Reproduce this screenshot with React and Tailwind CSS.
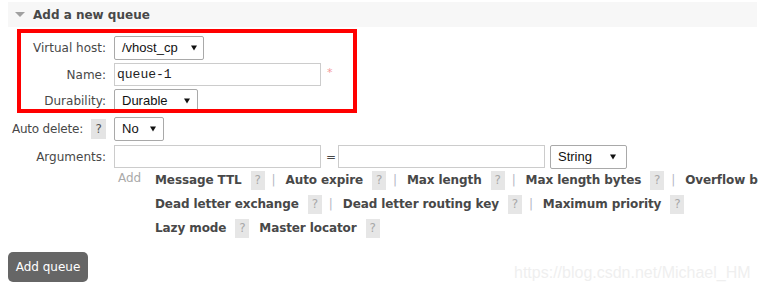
import React from 'react';

const LABEL = "w-[106px] shrink-0 text-right text-[12px] text-[#484848]";

function Arrow() {
  return (
    <svg width="6" height="6" viewBox="0 0 6 6" className="shrink-0">
      <path d="M0 0.5 L6 0.5 L3 5.5 Z" fill="#111" />
    </svg>
  );
}

function Select({ value, width, padRight = 'pr-[7px]' }) {
  return (
    <div
      className={`${width} h-[24px] ${padRight} pl-[7px] flex items-center justify-between border border-[#a9a9a9] rounded-[2px] bg-white font-['Liberation_Sans',sans-serif] text-[13px] text-[#111]`}
    >
      <span>{value}</span>
      <Arrow />
    </div>
  );
}

function Help() {
  return (
    <span className="inline-flex items-center justify-center w-[14px] h-[19px] bg-[#e6e6e6] text-[12px] font-normal text-[#a8a8a8]">
      ?
    </span>
  );
}

function Sep() {
  return <span className="ml-[7px] mr-[10px] font-normal text-[#b4b8c4]">|</span>;
}

// one line of argument shortcuts
function HelpLine({ items }) {
  return (
    <div className="h-[24px] flex items-center whitespace-nowrap text-[12px] tracking-[-0.1px] font-bold text-[#484848]">
      {items.map((item, i) => (
        <React.Fragment key={item.label}>
          <span>{item.label}</span>
          <span className="ml-[9px]">
            <Help />
          </span>
          {item.sep && <Sep />}
          {!item.sep && i < items.length - 1 && <span className="w-[10px]" />}
        </React.Fragment>
      ))}
    </div>
  );
}

export default function App() {
  return (
    <div className="relative w-[758px] h-[288px] overflow-hidden bg-white font-['DejaVu_Sans',sans-serif] text-[#484848]">
      <div className="pt-[2px] pl-[8px] pr-px">
        {/* Header */}
        <div className="h-[25px] bg-[#f7f7f7] flex items-center">
          <svg width="10" height="6" viewBox="0 0 10 6" className="ml-[7px]">
            <path d="M0 0 L10 0 L5 5 Z" fill="#a0a0a0" />
          </svg>
          <span className="ml-[8px] text-[12px] font-bold text-[#484848]">Add a new queue</span>
        </div>
      </div>

      {/* Form */}
      <div className="mt-[9px] flex flex-col gap-[3px]">
        <div className="flex items-center h-[24px]">
          <div className={LABEL}>Virtual host:</div>
          <div className="ml-[8px]">
            <Select value="/vhost_cp" width="w-[90px]" padRight="pr-[6px]" />
          </div>
        </div>

        <div className="flex items-center h-[23px]">
          <div className={LABEL}>Name:</div>
          <div className="ml-[8px] w-[207px] h-[23px] border border-[#cccccc] bg-white flex items-center pl-[2px] font-['Liberation_Mono',monospace] text-[13px] text-[#222]">
            queue-1
          </div>
          <span className="ml-[6px] self-start mt-[2px] text-[11px] text-[#f49a9a]">*</span>
        </div>

        <div className="flex items-center h-[24px]">
          <div className={LABEL}>Durability:</div>
          <div className="ml-[8px]">
            <Select value="Durable" width="w-[84px]" />
          </div>
        </div>

        <div className="flex items-center h-[24px] mt-[1px]">
          <div className="w-[106px] shrink-0 flex items-center justify-end text-[12px] tracking-[-0.2px]">
            <span>Auto delete:</span>
            <span className="ml-[8px] self-start">
              <span className="inline-flex items-center justify-center w-[15px] h-[20px] bg-[#e4e4e4] text-[12px] text-[#555]">?</span>
            </span>
          </div>
          <div className="ml-[8px]">
            <Select value="No" width="w-[50px]" />
          </div>
        </div>

        <div className="flex items-center h-[23px] mt-[1px]">
          <div className={LABEL}>Arguments:</div>
          <div className="ml-[8px] w-[207px] h-[23px] border border-[#cccccc] bg-white" />
          <span className="mx-[5px] w-[7px] text-center text-[12px]">=</span>
          <div className="w-[207px] h-[23px] border border-[#cccccc] bg-white" />
          <div className="ml-[5px]">
            <Select value="String" width="w-[77px]" padRight="pr-[10px]" />
          </div>
        </div>
      </div>

      {/* Argument shortcuts */}
      <div className="flex ml-[114px]">
        <div className="w-[41px] shrink-0 pl-[4px] pt-[1px] text-[12px] text-[#aaaaaa]">Add</div>
        <div className="flex flex-col">
          <HelpLine
            items={[
              { label: 'Message TTL', sep: true },
              { label: 'Auto expire', sep: true },
              { label: 'Max length', sep: true },
              { label: 'Max length bytes', sep: true },
              { label: 'Overflow behaviour' },
            ]}
          />
          <HelpLine
            items={[
              { label: 'Dead letter exchange', sep: true },
              { label: 'Dead letter routing key', sep: true },
              { label: 'Maximum priority' },
            ]}
          />
          <HelpLine items={[{ label: 'Lazy mode' }, { label: 'Master locator' }]} />
        </div>
      </div>

      <div className="pl-[8px] mt-[12px]">
        <button className="w-[80px] h-[30px] bg-[#666666] rounded-[5px] text-white text-[12px] font-['DejaVu_Sans',sans-serif]">
          Add queue
        </button>
      </div>

      {/* red annotation box */}
      <div className="absolute left-[17px] top-[29px] w-[340px] h-[84px] border-[4px] border-[#ff0000] pointer-events-none" />

      {/* watermark */}
      <div className="absolute left-[514px] top-[261px] font-['Liberation_Sans',sans-serif] text-[16px] text-[#efefef] whitespace-nowrap">
        https://blog.csdn.net/Michael_HM
      </div>
    </div>
  );
}
